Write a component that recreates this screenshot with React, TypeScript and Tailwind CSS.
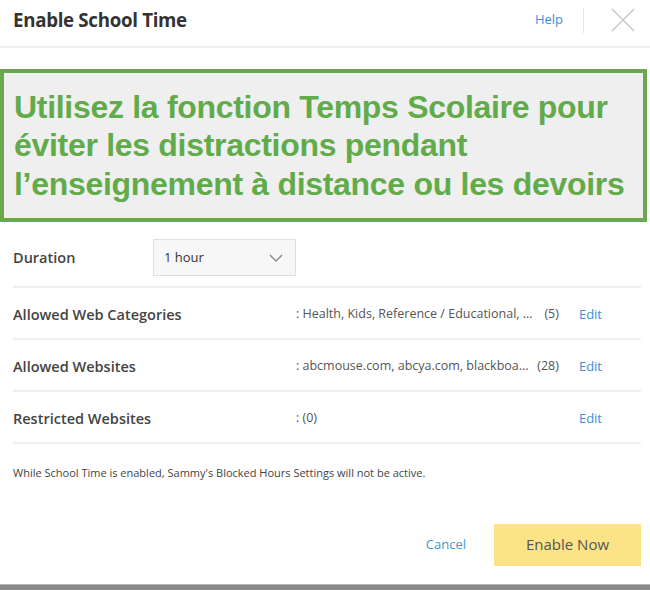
import React from 'react';

const ui = { fontFamily: '"Open Sans", "Noto Sans", sans-serif' };

const rows = [
  { label: 'Allowed Web Categories', value: ': Health, Kids, Reference / Educational, ...', count: '(5)' },
  { label: 'Allowed Websites', value: ': abcmouse.com, abcya.com, blackboa...', count: '(28)' },
  { label: 'Restricted Websites', value: ': (0)', count: '' },
];

export default function App() {
  return (
    <div className="w-[650px] h-[590px] bg-white flex flex-col overflow-hidden" style={ui}>
      {/* header */}
      <div className="h-[48px] flex items-center pl-[13px] pb-[6px] border-b-2 border-[#eeeeee]">
        <h1 className="text-[18.7px] font-bold text-[#333] tracking-[-0.3px] flex-1">Enable School Time</h1>
        <a className="text-[13px] text-[#3a8fd6] mr-[20px]">Help</a>
        <div className="w-px h-[25px] bg-[#e5e5e5] mr-[27px]" />
        <svg width="24" height="24" viewBox="0 0 24 24" className="mr-[15px]">
          <path d="M1 1 L23 23 M23 1 L1 23" stroke="#c4c4c4" strokeWidth="1.3" fill="none" />
        </svg>
      </div>

      {/* banner */}
      <div className="mt-[21px] mr-[3px] h-[153px] border-4 border-[#6aa84f] bg-[#efefef] flex items-center pl-[10px]">
        <p
          className="text-[32px] font-bold leading-[38.5px] text-[#62ab4b] tracking-[-0.3px]"
          style={{ fontFamily: '"Liberation Sans", Arial, sans-serif' }}
        >
          Utilisez la fonction Temps Scolaire pour
          <br />
          éviter les distractions pendant
          <br />
          l’enseignement à distance ou les devoirs
        </p>
      </div>

      {/* settings */}
      <div className="pl-[13px] pr-[9px]">
        <div className="flex items-center pt-[17px] pb-[10px] border-b-2 border-[#eeeeee]">
          <span className="w-[140px] text-[14.5px] font-semibold text-[#444] pt-[1px]">Duration</span>
          <div className="w-[143px] h-[37px] border border-[#e0e0e0] bg-[#f7f7f7] flex items-center justify-between pl-[10px] pr-[12px]">
            <span className="text-[13px] text-[#333]">1 hour</span>
            <svg width="14" height="8" viewBox="0 0 14 8">
              <path d="M1 1 L7 7 L13 1" stroke="#888" strokeWidth="1.4" fill="none" />
            </svg>
          </div>
        </div>
        {rows.map((r) => (
          <div key={r.label} className="h-[52px] pt-[3px] flex items-center border-b-2 border-[#eeeeee]">
            <span className="w-[283px] text-[14.5px] font-semibold text-[#444]">{r.label}</span>
            <span className="flex-1 whitespace-nowrap text-[12.5px] text-[#555]">{r.value}</span>
            <span className="text-[12.5px] text-[#555] mr-[20px]">{r.count}</span>
            <a className="text-[13px] text-[#3a8fd6] mr-[39px]">Edit</a>
          </div>
        ))}
        <p className="mt-[21px] text-[11px] text-[#444]">
          While School Time is enabled, Sammy's Blocked Hours Settings will not be active.
        </p>
      </div>

      {/* footer */}
      <div className="mt-[42px] flex items-center justify-end pr-[9px]">
        <a className="text-[13px] text-[#3a9bd6] mr-[28px]">Cancel</a>
        <button className="w-[147px] h-[42px] bg-[#fde387] text-[15px] text-[#555]">Enable Now</button>
      </div>

      <div className="mt-auto h-[6px] bg-[#8a8a8a] border-t border-[#b5b5b5]" />
    </div>
  );
}
